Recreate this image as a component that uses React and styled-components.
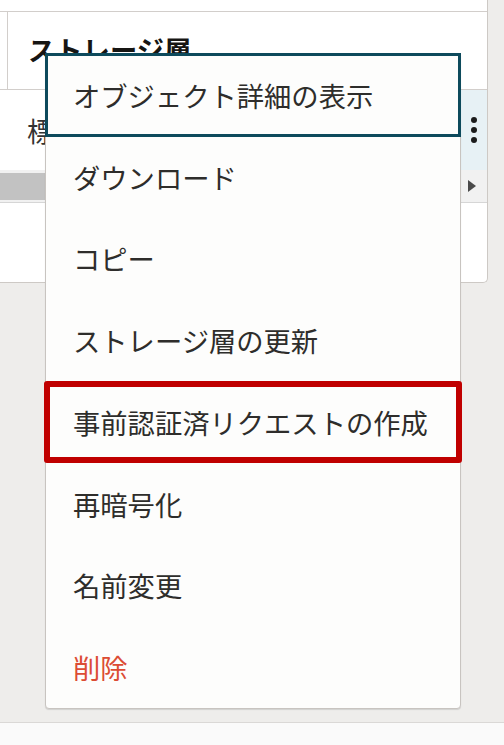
import React from "react"
import styled, { createGlobalStyle } from "styled-components"

const GlobalStyle = createGlobalStyle`
  html, body {
    margin: 0;
    padding: 0;
    height: 100%;
    overflow: hidden;
  }
  body {
    font-family: "Noto Sans CJK JP", "Noto Sans", sans-serif;
    background: #eeedeb;
    color: #161513;
  }
  #root {
    height: 100%;
  }
`

const Page = styled.div`
  position: relative;
  height: 100%;
  display: flex;
  flex-direction: column;
`

const Panel = styled.div`
  width: 488px;
  height: 283px;
  box-sizing: border-box;
  background: #ffffff;
  border-right: 1px solid #cdc9c5;
  border-bottom: 1px solid #cdc9c5;
  border-bottom-right-radius: 5px;
  display: flex;
  flex-direction: column;
`

const TopRow = styled.div`
  height: 11px;
  border-bottom: 1px solid #d2cecb;
`

const HeaderRow = styled.div`
  height: 77px;
  border-bottom: 1px solid #d2cecb;
  padding-left: 7px;
  display: flex;
`

const HeaderCell = styled.div`
  flex: 1;
  border-left: 1px solid #d2cecb;
  padding: 0 0 4px 20px;
  display: flex;
  align-items: center;
  font-size: 27.3px;
  font-weight: 700;
  color: #161513;
  white-space: nowrap;
`

const BodyRow = styled.div`
  height: 80px;
  display: grid;
  grid-template-columns: 1fr 26px;
`

const Cell = styled.div`
  display: flex;
  align-items: center;
  padding-left: ${p => p.$pad || 0}px;
  background: ${p => p.$active ? "#e7f1f5" : "transparent"};
  font-size: 27.3px;
  color: #333;
  white-space: nowrap;
  justify-content: ${p => p.$center ? "center" : "flex-start"};
`

const ScrollRow = styled.div`
  height: 32px;
  border-bottom: 1px solid #d6d6d6;
  display: grid;
  grid-template-columns: 1fr 26px;
  background: #f1f1f1;
`

const Thumb = styled.div`
  margin: 3px 0 2px;
  background: #c2c2c2;
`

const ArrowButton = styled.div`
  display: flex;
  align-items: center;
  justify-content: center;
  padding-right: 4px;
`

const Filler = styled.div`
  flex: 1;
`

const Spacer = styled.div`
  flex: 1;
`

const Footer = styled.div`
  height: 22px;
  border-top: 1px solid #dad8d6;
  background: #fafafa;
`

const Menu = styled.ul`
  position: absolute;
  top: 53px;
  left: 45px;
  width: 416px;
  margin: 0;
  padding: 0;
  list-style: none;
  box-sizing: border-box;
  background: #fdfdfc;
  border: 1px solid #c8c4c0;
  border-radius: 4px;
  box-shadow: 0 1px 1px rgba(0, 0, 0, 0.12);
`

const Item = styled.li`
  position: relative;
  height: 81.75px;
  display: flex;
  align-items: center;
  padding-left: 27px;
  font-size: 27.3px;
  color: ${p => p.$danger ? "#dc4c34" : "#2e2d2b"};
  white-space: nowrap;
  outline: ${p => p.$focused ? "3px solid #0d4a5c" : "none"};
  outline-offset: -2px;

  ${p => p.$marked && `
    &::after {
      content: "";
      position: absolute;
      top: 0;
      bottom: 0;
      left: -2px;
      right: -2px;
      border: 6px solid #c00000;
      border-radius: 3px;
    }
  `}
`

const Kebab = () => (
  <svg width="8" height="26" viewBox="0 0 8 26">
    <circle cx="4" cy="3" r="3" fill="#1c1c1c" />
    <circle cx="4" cy="13" r="3" fill="#1c1c1c" />
    <circle cx="4" cy="23" r="3" fill="#1c1c1c" />
  </svg>
)

const items = [
  { label: "オブジェクト詳細の表示", focused: true },
  { label: "ダウンロード" },
  { label: "コピー" },
  { label: "ストレージ層の更新" },
  { label: "事前認証済リクエストの作成", marked: true },
  { label: "再暗号化" },
  { label: "名前変更" },
  { label: "削除", danger: true },
]

export default function App() {
  return (
    <Page>
      <GlobalStyle />
      <Panel>
        <TopRow />
        <HeaderRow>
          <HeaderCell>ストレージ層</HeaderCell>
        </HeaderRow>
        <BodyRow>
          <Cell $pad={27}>標準</Cell>
          <Cell $active $center>
            <Kebab />
          </Cell>
        </BodyRow>
        <ScrollRow>
          <Thumb />
          <ArrowButton>
            <svg width="8" height="12" viewBox="0 0 8 12">
              <path d="M0 0 L8 6 L0 12 Z" fill="#4a4a4a" />
            </svg>
          </ArrowButton>
        </ScrollRow>
        <Filler />
      </Panel>
      <Spacer />
      <Footer />

      <Menu>
        {items.map(it => (
          <Item
            key={it.label}
            $focused={it.focused}
            $marked={it.marked}
            $danger={it.danger}
          >
            {it.label}
          </Item>
        ))}
      </Menu>
    </Page>
  )
}
